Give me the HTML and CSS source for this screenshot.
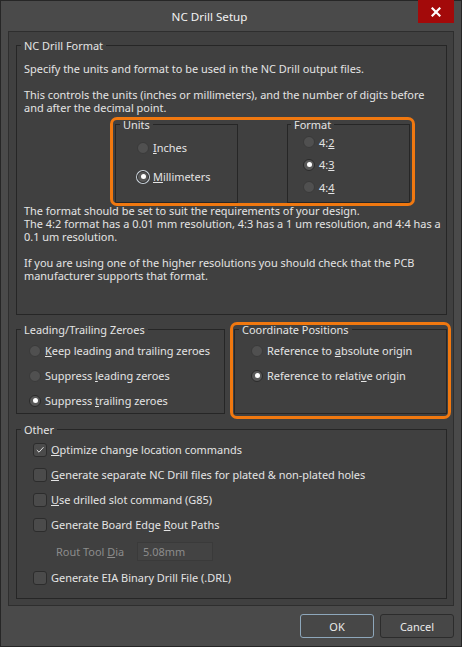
FILE: index.html
```html
<!DOCTYPE html>
<html>
<head>
<meta charset="utf-8">
<link rel="stylesheet" href="styles.css">
</head>
<body>
<div class="window">
  <div class="titlebar">
    <span class="title">NC Drill Setup</span>
    <div class="close"><svg width="10" height="10" viewBox="0 0 10 10"><path d="M1.5 1.5 L8.5 8.5 M8.5 1.5 L1.5 8.5" stroke="#fff" stroke-width="2.2" stroke-linecap="square"/></svg></div>
  </div>
  <div class="panel">
    <fieldset class="group fmt-group">
      <legend>NC Drill Format</legend>
      <p>Specify the units and format to be used in the NC Drill output files.</p>
      <p>This controls the units (inches or millimeters), and the number of digits before<br>and after the decimal point.</p>
      <div class="units-row">
        <fieldset class="group units">
          <legend>Units</legend>
          <label class="radio"><span class="dot"></span><span><u>I</u>nches</span></label>
          <label class="radio"><span class="dot on focus"></span><span><u>M</u>illimeters</span></label>
        </fieldset>
        <fieldset class="group format">
          <legend>Format</legend>
          <label class="radio"><span class="dot"></span><span>4:<u>2</u></span></label>
          <label class="radio"><span class="dot on"></span><span>4:<u>3</u></span></label>
          <label class="radio"><span class="dot"></span><span>4:<u>4</u></span></label>
        </fieldset>
      </div>
      <p class="after-row">The format should be set to suit the requirements of your design.<br>The 4:2 format has a 0.01 mm resolution, 4:3 has a 1 um resolution, and 4:4 has a<br>0.1 um resolution.</p>
      <p>If you are using one of the higher resolutions you should check that the PCB<br>manufacturer supports that format.</p>
    </fieldset>
    <div class="pair">
      <fieldset class="group zeroes">
        <legend>Leading/Trailing Zeroes</legend>
        <label class="radio"><span class="dot"></span><span><u>K</u>eep leading and trailing zeroes</span></label>
        <label class="radio"><span class="dot"></span><span>Suppress <u>l</u>eading zeroes</span></label>
        <label class="radio"><span class="dot on"></span><span>Suppress <u>t</u>railing zeroes</span></label>
      </fieldset>
      <div class="coord-wrap">
        <fieldset class="group coord">
          <legend>Coordinate Positions</legend>
          <label class="radio"><span class="dot"></span><span>Reference to <u>a</u>bsolute origin</span></label>
          <label class="radio"><span class="dot on"></span><span>Reference to relati<u>v</u>e origin</span></label>
        </fieldset>
      </div>
    </div>
    <fieldset class="group other">
      <legend>Other</legend>
      <label class="check"><span class="box on"><svg width="12" height="12" viewBox="0 0 12 12"><path d="M2.8 6 L5 8.2 L9.5 3.2" fill="none" stroke="#e0e0e0" stroke-width="1"/></svg></span><span><u>O</u>ptimize change location commands</span></label>
      <label class="check"><span class="box"></span><span><u>G</u>enerate separate NC Drill files for plated &amp; non-plated holes</span></label>
      <label class="check"><span class="box"></span><span><u>U</u>se drilled slot command (G85)</span></label>
      <label class="check"><span class="box"></span><span>Generate Board Edge <u>R</u>out Paths</span></label>
      <div class="rout"><span class="rout-label">Rout Tool <u>D</u>ia</span><span class="input">5.08mm</span></div>
      <label class="check"><span class="box"></span><span>Generate EIA Binary Drill File (.DRL)</span></label>
    </fieldset>
  </div>
  <div class="buttons">
    <button class="btn default">OK</button>
    <button class="btn">Cancel</button>
  </div>
</div>
</body>
</html>
```
FILE: styles.css
```css
* { box-sizing: border-box; }
html, body { margin: 0; padding: 0; background: #4a4a4a; }
body { font-family: "Noto Sans", "Open Sans", sans-serif; font-size: 10.95px; color: #e4e4e4; }
.window {
  width: 462px; height: 647px;
  background: #4a4a4a;
  border: 1px solid #262626;
  display: flex; flex-direction: column;
}
.titlebar {
  height: 30px;
  display: flex; align-items: flex-start;
}
.title {
  flex: 1; text-align: center;
  font-size: 11.6px; color: #f2f2f2; line-height: 30px; padding-top: 1px;
}
.close {
  margin: -1px 7px 0 0;
  width: 36px; height: 23px; background: #a30a0a;
  display: flex; align-items: center; justify-content: center;
}
.panel {
  margin: 0 7px;
  height: 575px;
  background: #404040;
  border: 1px solid #2e2e2e;
  padding: 7px 6px 0 7px;
}
.group {
  --pl: 7px;
  margin: 0; border: 1px solid #262626;
  min-width: 0;
  padding-left: var(--pl);
}
.group legend { padding: 0 3px; line-height: 13px; margin-left: calc(4px - var(--pl)); }
.fmt-group { height: 276px; padding-top: 10px; padding-right: 6px; padding-bottom: 0; }
p { margin: 0; line-height: 13px; white-space: nowrap; }
p + p { margin-top: 13px; }
.units-row {
  position: relative;
  display: flex; gap: 49px;
  margin: 4px 0 0 91px; width: 295px;
}
.units-row::after {
  content: ""; position: absolute;
  left: -5px; right: -5px; top: -1px; bottom: -3px;
  border: 3px solid #f07810; border-radius: 7px;
  pointer-events: none;
}
.units, .format { width: 123px; height: 85px; padding-right: 0; padding-bottom: 0; }
.units { --pl: 21px; padding-top: 2px; }
.units .radio { height: 29px; }
.format { --pl: 15px; padding-top: 0; }
.format .radio { height: 22.5px; }
.format legend { margin-left: calc(3px - var(--pl)); }
p.after-row { margin-top: 1px; }
.radio, .check { display: flex; align-items: center; gap: 4px; white-space: nowrap; }
.dot {
  width: 12px; height: 12px; border-radius: 50%;
  background: #505050; border: 1px solid #3a3a3a;
  display: flex; align-items: center; justify-content: center; flex: none;
}
.dot.on::after { content: ""; width: 5px; height: 5px; border-radius: 50%; background: #fff; }
.dot.on { background: #585858; border-color: #2a2a2a; }
.dot.focus { box-shadow: 0 0 0 1px #c8d0d8; }
.pair { display: flex; gap: 9px; margin-top: 8px; }
.zeroes { --pl: 12px; width: 210px; height: 91px; padding-top: 2px; padding-right: 0; padding-bottom: 0; }
.zeroes .radio, .coord .radio { height: 25px; }
.coord-wrap { position: relative; }
.coord-wrap::after {
  content: ""; position: absolute;
  left: -4px; right: -4px; top: -1px; bottom: -5px;
  border: 3px solid #f07810; border-radius: 7px;
  pointer-events: none;
}
.coord { --pl: 16px; width: 213px; height: 91px; padding-top: 2px; padding-right: 0; padding-bottom: 0; }
.other { --pl: 16px; margin-top: 9px; height: 176px; padding-top: 1px; padding-right: 0; padding-bottom: 0; }
.check { height: 25px; }
.box {
  width: 14px; height: 14px; border-radius: 3px;
  background: #4b4b4b; border: 1px solid #2c2c2c; flex: none;
  display: flex; align-items: center; justify-content: center;
}
.rout { height: 28px; display: flex; align-items: center; padding-left: 23px; color: #8c8c8c; }
.rout-label { width: 81px; }
.input {
  width: 76px; height: 19px; background: #434343; border: 1px solid #3a3a3a;
  display: flex; align-items: center; padding-left: 5px; color: #8c8c8c;
}
.buttons { display: flex; justify-content: flex-end; gap: 6px; padding: 8px 7px 0 0; }
.btn {
  width: 74px; height: 24px; border-radius: 3px;
  background: #474747; border: 1px solid #2c2c2c;
  color: #eaeaea; font-family: inherit; font-size: 11px; padding: 0;
}
.btn.default { border-color: #8ea7bb; }
```
